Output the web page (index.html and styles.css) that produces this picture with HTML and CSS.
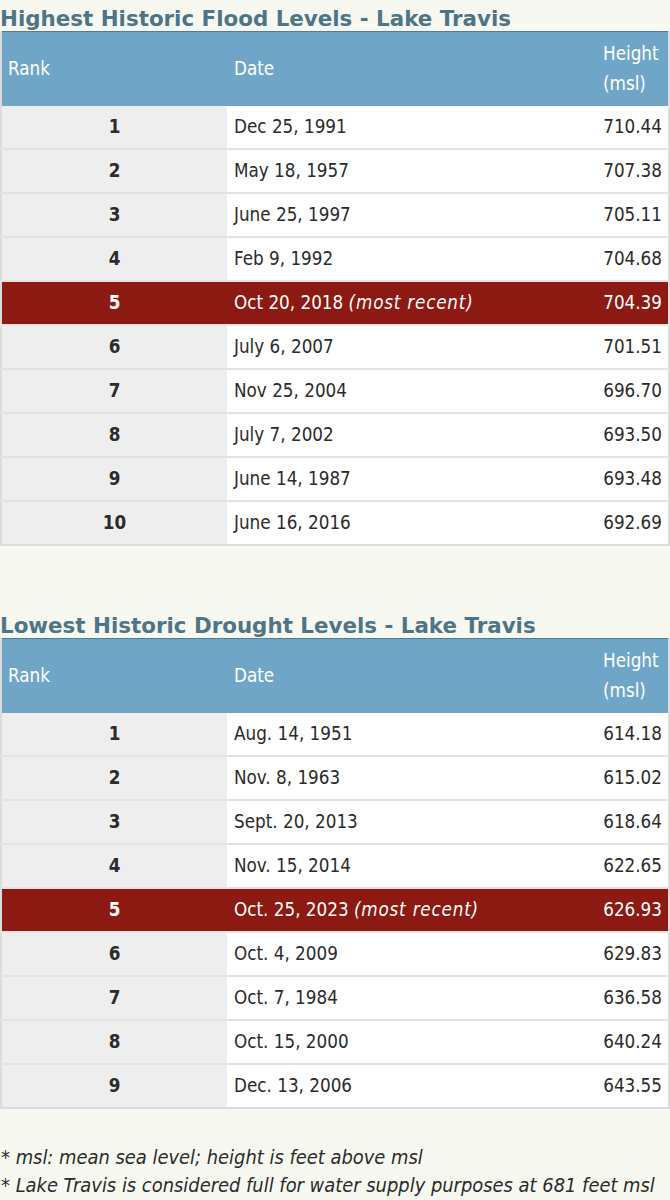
FILE: index.html
```html
<!DOCTYPE html>
<html lang="en">
<head>
<meta charset="utf-8">
<title>Lake Travis Historic Levels</title>
<link rel="stylesheet" href="styles.css">
</head>
<body>
<h2 class="title">Highest Historic Flood Levels - Lake Travis</h2>
<table class="levels">
  <thead>
    <tr><th class="c-rank">Rank</th><th class="c-date">Date</th><th class="c-height">Height (msl)</th></tr>
  </thead>
  <tbody>
    <tr><td class="c-rank">1</td><td class="c-date">Dec 25, 1991</td><td class="c-height">710.44</td></tr>
    <tr><td class="c-rank">2</td><td class="c-date">May 18, 1957</td><td class="c-height">707.38</td></tr>
    <tr><td class="c-rank">3</td><td class="c-date">June 25, 1997</td><td class="c-height">705.11</td></tr>
    <tr><td class="c-rank">4</td><td class="c-date">Feb 9, 1992</td><td class="c-height">704.68</td></tr>
    <tr class="recent"><td class="c-rank">5</td><td class="c-date">Oct 20, 2018 <em>(most recent)</em></td><td class="c-height">704.39</td></tr>
    <tr><td class="c-rank">6</td><td class="c-date">July 6, 2007</td><td class="c-height">701.51</td></tr>
    <tr><td class="c-rank">7</td><td class="c-date">Nov 25, 2004</td><td class="c-height">696.70</td></tr>
    <tr><td class="c-rank">8</td><td class="c-date">July 7, 2002</td><td class="c-height">693.50</td></tr>
    <tr><td class="c-rank">9</td><td class="c-date">June 14, 1987</td><td class="c-height">693.48</td></tr>
    <tr><td class="c-rank">10</td><td class="c-date">June 16, 2016</td><td class="c-height">692.69</td></tr>
  </tbody>
</table>

<h2 class="title second">Lowest Historic Drought Levels - Lake Travis</h2>
<table class="levels">
  <thead>
    <tr><th class="c-rank">Rank</th><th class="c-date">Date</th><th class="c-height">Height (msl)</th></tr>
  </thead>
  <tbody>
    <tr><td class="c-rank">1</td><td class="c-date">Aug. 14, 1951</td><td class="c-height">614.18</td></tr>
    <tr><td class="c-rank">2</td><td class="c-date">Nov. 8, 1963</td><td class="c-height">615.02</td></tr>
    <tr><td class="c-rank">3</td><td class="c-date">Sept. 20, 2013</td><td class="c-height">618.64</td></tr>
    <tr><td class="c-rank">4</td><td class="c-date">Nov. 15, 2014</td><td class="c-height">622.65</td></tr>
    <tr class="recent"><td class="c-rank">5</td><td class="c-date">Oct. 25, 2023 <em>(most recent)</em></td><td class="c-height">626.93</td></tr>
    <tr><td class="c-rank">6</td><td class="c-date">Oct. 4, 2009</td><td class="c-height">629.83</td></tr>
    <tr><td class="c-rank">7</td><td class="c-date">Oct. 7, 1984</td><td class="c-height">636.58</td></tr>
    <tr><td class="c-rank">8</td><td class="c-date">Oct. 15, 2000</td><td class="c-height">640.24</td></tr>
    <tr><td class="c-rank">9</td><td class="c-date">Dec. 13, 2006</td><td class="c-height">643.55</td></tr>
  </tbody>
</table>

<div class="notes">
  <p>* msl: mean sea level; height is feet above msl</p>
  <p>* Lake Travis is considered full for water supply purposes at 681 feet msl</p>
</div>
</body>
</html>
```

FILE: styles.css
```css
html, body {
  margin: 0;
  padding: 0;
  background: #f7f9f1;
}

body {
  font-family: "DejaVu Sans Condensed", "DejaVu Sans", sans-serif;
  font-stretch: condensed;
  font-size: 18.7px;
  color: #2b2b2b;
}

.title {
  margin: 0;
  padding-top: 7px;
  font-family: "DejaVu Sans", sans-serif;
  font-stretch: normal;
  font-size: 21.4px;
  line-height: 24px;
  font-weight: bold;
  color: #4e7488;
  white-space: nowrap;
}

.title.second {
  margin-top: 61px;
}

.levels {
  width: 100%;
  border-collapse: collapse;
  table-layout: fixed;
  border-left: 2px solid #dcdcdc;
  border-right: 2px solid #dcdcdc;
}

.levels thead tr {
  border-top: 1px solid #557b91;
}

.levels th {
  background: #6fa6c8;
  color: #ffffff;
  font-weight: normal;
  line-height: 30px;
  padding: 7px 7px 7px 6px;
  text-align: left;
  vertical-align: middle;
}

.levels th.c-date {
  padding-left: 7px;
}

.levels th.c-height {
  padding-left: 7px;
}

.levels td {
  height: 42px;
  padding: 0 7px;
  line-height: 42px;
  border-bottom: 2px solid #e3e3e3;
  background: #ffffff;
  white-space: nowrap;
  overflow: visible;
}

.levels tbody tr:last-child td {
  border-bottom-color: #dcdcdc;
}

.c-rank {
  width: 212px;
}

.c-height {
  width: 58px;
}

.levels td.c-rank {
  background: #eeeeee;
  text-align: center;
  font-weight: bold;
}

.levels td.c-height {
  text-align: right;
  padding-right: 6px;
}

.levels tr.recent td,
.levels tr.recent td.c-rank {
  background: #8c1912;
  color: #ffffff;
}

.levels em {
  font-style: italic;
  letter-spacing: 0.8px;
}

.notes {
  margin-top: 35px;
  padding-left: 1px;
}

.notes p {
  margin: 0;
  font-size: 19.9px;
  font-style: italic;
  line-height: 28px;
  color: #2b2b2b;
  white-space: nowrap;
}
```
